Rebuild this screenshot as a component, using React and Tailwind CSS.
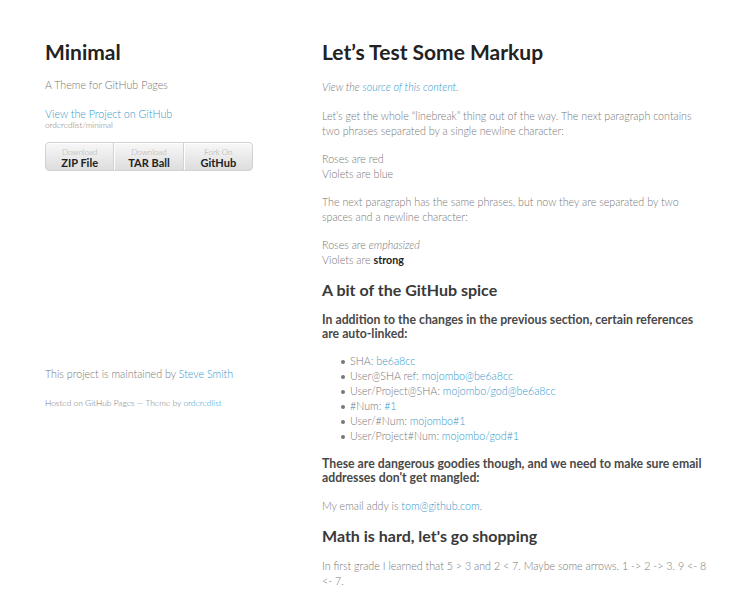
import React from 'react';

const link = 'text-[#39c] font-light';

function Button({ small, label, first, last }) {
  return (
    <li className={`flex-1 h-full ${last ? '' : 'border-r border-r-[#d2d2d2]'} ${first ? '' : 'border-l border-l-white'}`}>
      <a className="block h-full pt-[5px] text-center text-[8px] leading-none text-[#aaa]">
        {small}
        <strong className="block text-[11px] font-bold text-[#222] mt-[1px]">{label}</strong>
      </a>
    </li>
  );
}

function Item({ children }) {
  return (
    <li>
      <span className="inline-block w-[4px] h-[4px] rounded-full bg-[#777] -ml-[9px] mr-[5px] align-middle" />
      {children}
    </li>
  );
}

export default function App() {
  return (
    <div
      className="min-h-screen bg-white pt-[40px] pl-[45px] text-[10.7px] leading-[15px] font-light text-[#777]"
      style={{ fontFamily: 'Lato, "Liberation Sans", sans-serif' }}
    >
      <div className="flex">
        {/* header + footer */}
        <div className="w-[208px] shrink-0 flex flex-col">
          <h1 className="text-[21px] leading-[23px] font-bold text-[#222] mb-[14px]">Minimal</h1>
          <p className="mb-[14px]">A Theme for GitHub Pages</p>
          <p className="mb-[13.5px]">
            <a className={link}>
              View the Project on GitHub
              <small className="block text-[8.2px] leading-[7px] mt-[0.5px] text-[#777]">orderedlist/minimal</small>
            </a>
          </p>
          <ul className="flex h-[29px] w-[208px] rounded-[4px] border border-[#d2d2d2] bg-gradient-to-b from-[#f8f8f8] to-[#dddddd] shadow-[inset_0_1px_0_#fff]">
            <Button small="Download" label="ZIP File" first />
            <Button small="Download" label="TAR Ball" />
            <Button small="Fork On" label="GitHub" last />
          </ul>

          <div className="mt-[195px]">
            <p className="mb-[15px]">
              This project is maintained by <a className={link}>Steve Smith</a>
            </p>
            <p className="leading-[12px]">
              <small className="text-[8.4px]">
                Hosted on GitHub Pages — Theme by <a className={link}>orderedlist</a>
              </small>
            </p>
          </div>
        </div>

        {/* section */}
        <div className="ml-[69px] w-[386px]">
          <h1 className="text-[21px] leading-[23px] font-bold text-[#222] mb-[16px]">Let’s Test Some Markup</h1>
          <p className="mb-[14px]">
            <em>
              View the <a className={link}>source of this content</a>.
            </em>
          </p>
          <p className="mb-[13px]">
            Let’s get the whole “linebreak” thing out of the way. The next paragraph contains two phrases separated by a
            single newline character:
          </p>
          <p className="mb-[13px]">
            Roses are red
            <br />
            Violets are blue
          </p>
          <p className="mb-[13px]">
            The next paragraph has the same phrases, but now they are separated by two spaces and a newline character:
          </p>
          <p className="mb-[14px]">
            Roses are <em>emphasized</em>
            <br />
            Violets are <strong className="font-bold text-[#222]">strong</strong>
          </p>

          <h2 className="text-[16px] leading-[18px] font-bold text-[#393939] mb-[14px]">A bit of the GitHub spice</h2>
          <h3 className="text-[12.25px] leading-[14px] font-bold text-[#494949] mb-[12px]">
            In addition to the changes in the previous section, certain references are auto-linked:
          </h3>
          <ul className="pl-[28px] mb-[14px]">
            <Item>
              SHA: <a className={link}>be6a8cc</a>
            </Item>
            <Item>
              User@SHA ref: <a className={link}>mojombo@be6a8cc</a>
            </Item>
            <Item>
              User/Project@SHA: <a className={link}>mojombo/god@be6a8cc</a>
            </Item>
            <Item>
              #Num: <a className={link}>#1</a>
            </Item>
            <Item>
              User/#Num: <a className={link}>mojombo#1</a>
            </Item>
            <Item>
              User/Project#Num: <a className={link}>mojombo/god#1</a>
            </Item>
          </ul>
          <h3 className="text-[12.25px] leading-[14px] font-bold text-[#494949] mb-[13px]">
            These are dangerous goodies though, and we need to make sure email addresses don't get mangled:
          </h3>
          <p className="mb-[14px]">
            My email addy is <a className={link}>tom@github.com</a>.
          </p>
          <h2 className="text-[16px] leading-[18px] font-bold text-[#393939] mb-[13px]">Math is hard, let's go shopping</h2>
          <p>
            In first grade I learned that 5 &gt; 3 and 2 &lt; 7. Maybe some arrows. 1 -&gt; 2 -&gt; 3. 9 &lt;- 8 &lt;- 7.
          </p>
        </div>
      </div>
    </div>
  );
}
